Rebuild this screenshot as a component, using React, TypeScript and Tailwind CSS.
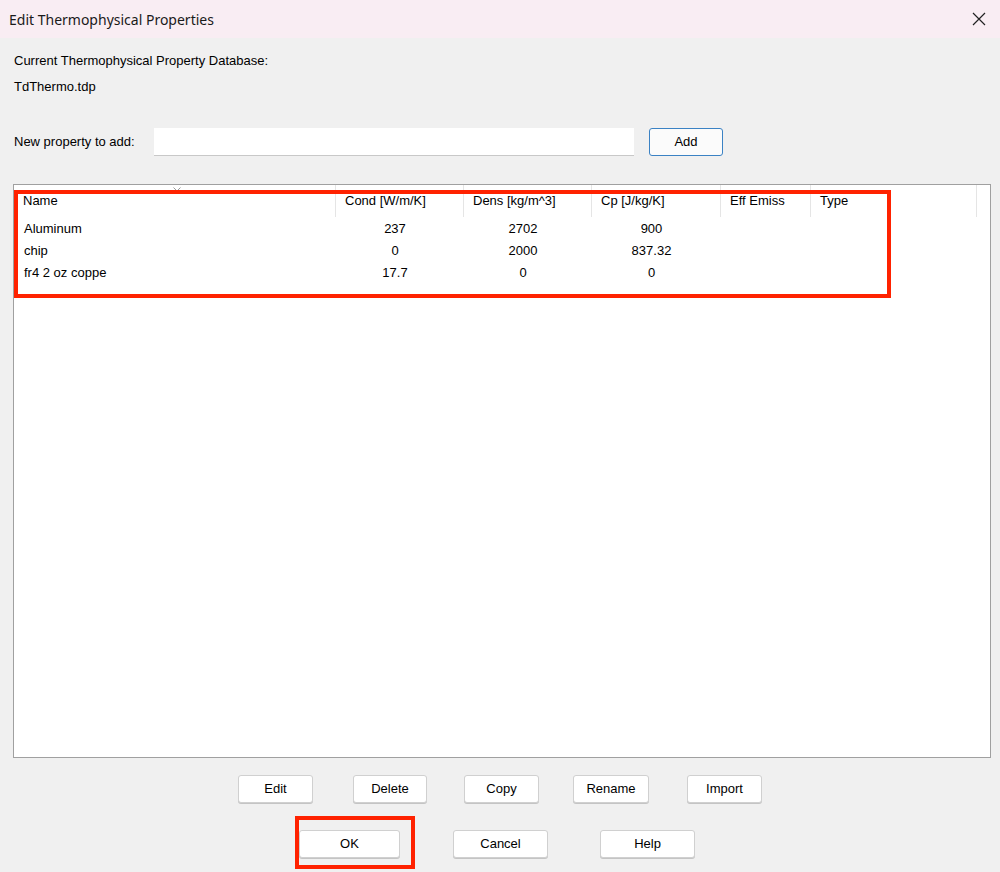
import React from "react";

const columns = [
  { label: "Name", width: 322 },
  { label: "Cond [W/m/K]", width: 128 },
  { label: "Dens [kg/m^3]", width: 128 },
  { label: "Cp [J/kg/K]", width: 129 },
  { label: "Eff Emiss", width: 90 },
  { label: "Type", width: 166 },
];

const rows = [
  ["Aluminum", "237", "2702", "900"],
  ["chip", "0", "2000", "837.32"],
  ["fr4 2 oz coppe", "17.7", "0", "0"],
];

function WinButton({ label, className = "" }: { label: string; className?: string }) {
  return (
    <button
      className={
        "h-[28px] rounded-[3px] border border-[#d0d0d0] bg-white text-[13px] text-black shadow-[0_1px_0_#c4c4c4] " +
        className
      }
    >
      {label}
    </button>
  );
}

export default function App() {
  return (
    <div
      className="relative flex h-[872px] w-[1000px] flex-col bg-[#f0f0f0] text-black"
      style={{ fontFamily: '"Liberation Sans", Arial, sans-serif' }}
    >
      {/* title bar */}
      <div className="flex h-[38px] items-center justify-between bg-[#f9edf3] pl-[9px] pr-[10px]">
        <span className="text-[14px] text-[#1a1a1a]" style={{ fontFamily: '"Noto Sans", "Open Sans", sans-serif' }}>
          Edit Thermophysical Properties
        </span>
        <svg width="14" height="14" viewBox="0 0 14 14" className="mr-[4px]">
          <path d="M1 1 L13 13 M13 1 L1 13" stroke="#222" strokeWidth="1.2" />
        </svg>
      </div>

      <div className="flex flex-col px-[14px] text-[13px]">
        <div className="mt-[15px] leading-[16px]">Current Thermophysical Property Database:</div>
        <div className="mt-[10px] leading-[16px]">TdThermo.tdp</div>

        <div className="mt-[33px] flex h-[28px] items-center">
          <span className="w-[140px]">New property to add:</span>
          <div className="h-[28px] w-[480px] border-b border-[#c8c8c8] bg-white" />
          <button className="ml-[15px] h-[28px] w-[74px] rounded-[3px] border border-[#3b82c4] bg-[#fbfbfb] text-[13px]">
            Add
          </button>
        </div>
      </div>

      {/* list view */}
      <div className="relative ml-[13px] mt-[28px] h-[574px] w-[978px] border border-[#a0a0a0] bg-white text-[13px]">
        <div className="flex h-[32px]">
          {columns.map((c, i) => (
            <div
              key={c.label}
              className="relative flex items-center border-r border-[#e5e5e5] pl-[9px]"
              style={{ width: c.width }}
            >
              {c.label}
              {i === 0 && (
                <svg width="8" height="5" viewBox="0 0 8 5" className="absolute left-[159px] top-[2px]">
                  <path d="M0.5 0.5 L4 4 L7.5 0.5" stroke="#9a9a9a" strokeWidth="1" fill="none" />
                </svg>
              )}
            </div>
          ))}
        </div>
        <div className="mt-[1px] flex flex-col">
          {rows.map((r) => (
            <div key={r[0]} className="flex h-[22px] items-center leading-[22px]">
              <div className="w-[322px] pl-[10px]">{r[0]}</div>
              <div className="w-[128px] pr-[10px] text-center">{r[1]}</div>
              <div className="w-[128px] pr-[10px] text-center">{r[2]}</div>
              <div className="w-[129px] pr-[10px] text-center">{r[3]}</div>
            </div>
          ))}
        </div>
        {/* annotation */}
        <div className="pointer-events-none absolute left-[0px] top-[5px] h-[108px] w-[877px] border-[4px] border-[#ff2200]" />
      </div>

      <div className="mt-[17px] flex pl-[238px]">
        <WinButton label="Edit" className="w-[75px]" />
        <WinButton label="Delete" className="ml-[40px] w-[74px]" />
        <WinButton label="Copy" className="ml-[37px] w-[75px]" />
        <WinButton label="Rename" className="ml-[34px] w-[76px]" />
        <WinButton label="Import" className="ml-[38px] w-[75px]" />
      </div>

      <div className="mt-[27px] flex pl-[299px]">
        <div className="relative">
          <WinButton label="OK" className="w-[101px]" />
          <div className="pointer-events-none absolute left-[-4px] top-[-14px] h-[53px] w-[120px] border-[4px] border-[#ff2200]" />
        </div>
        <WinButton label="Cancel" className="ml-[53px] w-[95px]" />
        <WinButton label="Help" className="ml-[52px] w-[95px]" />
      </div>
    </div>
  );
}
